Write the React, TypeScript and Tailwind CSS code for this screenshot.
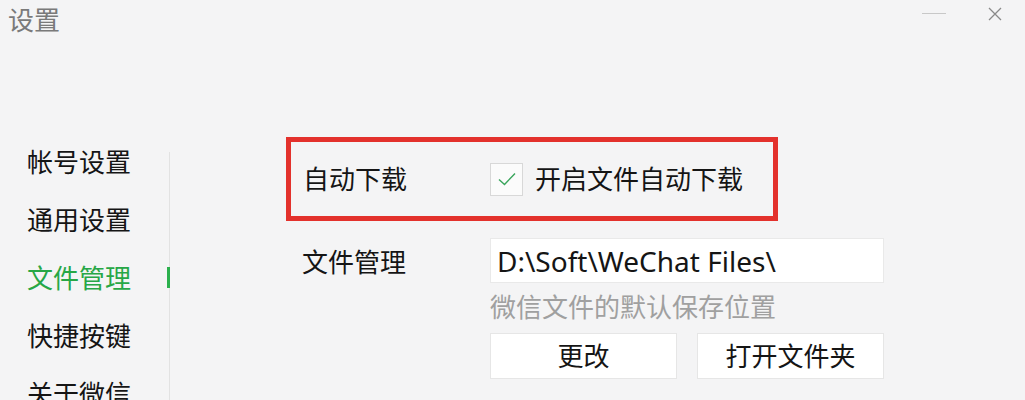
import React from 'react';

const menu = ['帐号设置', '通用设置', '文件管理', '快捷按键', '关于微信'];

export default function App() {
  const active = 2;

  return (
    <div className="w-[1025px] h-[400px] bg-[#f4f4f5] overflow-hidden text-[#151515] font-['Noto_Sans','Noto_Sans_CJK_SC',sans-serif]">
      {/* title bar */}
      <div className="h-[34px] flex items-start justify-between">
        <div className="pl-[8px] pt-[7px] text-[26px] leading-none text-[#7a7a7a]">设置</div>
        <div className="flex items-start">
          <div className="w-[24px] h-px bg-[#c8c8c8] mt-[13px] mr-[42px]" />
          <svg width="14" height="14" viewBox="0 0 14 14" className="mt-[7px] mr-[23px]">
            <path d="M1 1 L13 13 M13 1 L1 13" stroke="#8a8a8a" strokeWidth="1.3" fill="none" />
          </svg>
        </div>
      </div>

      <div className="mt-[99px] h-[267px] flex">
        {/* sidebar */}
        <div className="w-[169px] pl-[27px]">
          {menu.map((m, i) => (
            <div
              key={m}
              className={
                'h-[58px] flex items-center text-[26px] leading-none ' +
                (i === active ? 'text-[#27a746]' : 'text-[#151515]')
              }
            >
              {m}
            </div>
          ))}
        </div>

        <div className="relative w-px mt-[19px] bg-[#e2e2e2]">
          <div className="absolute left-[-2px] top-[115px] w-[3px] h-[21px] bg-[#2bb04d]" />
        </div>

        {/* content */}
        <div className="pl-[116px] pt-[4px]">
          <div className="w-[492px] h-[84px] border-[5px] border-[#e3312c] flex items-center pl-[12px]">
            <div className="w-[187px] text-[26px] leading-none">自动下载</div>
            <div className="w-[33px] h-[33px] bg-[#fbfbfb] border border-[#d8d8d8] flex items-center justify-center">
              <svg width="22" height="18" viewBox="0 0 22 18">
                <path d="M3 9.5 L8.5 14.5 L19 3.5" stroke="#3aa55c" strokeWidth="1.4" fill="none" />
              </svg>
            </div>
            <div className="ml-[12px] text-[26px] leading-none">开启文件自动下载</div>
          </div>

          <div className="mt-[17px] flex">
            <div className="ml-[16px] w-[188px] h-[44px] flex items-center pt-[4px] text-[26px] leading-none">
              文件管理
            </div>
            <div className="flex flex-col">
              <div className="w-[394px] h-[45px] bg-white border border-[#e9e9e9] px-[6px] flex items-center text-[28px] leading-none">
                D:\Soft\WeChat Files\
              </div>
              <div className="mt-[11px] text-[26px] leading-none text-[#a0a0a0]">微信文件的默认保存位置</div>
              <div className="mt-[13px] flex gap-[20px]">
                <button className="w-[187px] h-[46px] bg-white border border-[#e6e6e6] text-[26px] leading-none">
                  更改
                </button>
                <button className="w-[187px] h-[46px] bg-white border border-[#e6e6e6] text-[26px] leading-none">
                  打开文件夹
                </button>
              </div>
            </div>
          </div>
        </div>
      </div>
    </div>
  );
}
